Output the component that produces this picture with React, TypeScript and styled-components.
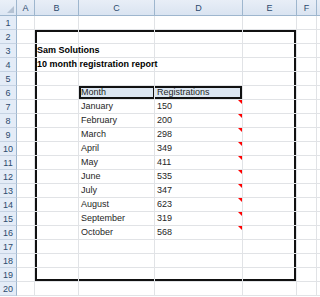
import { Fragment } from "react";
import styled, { createGlobalStyle } from "styled-components";

const GlobalStyle = createGlobalStyle`
  html, body {
    margin: 0;
    padding: 0;
    background: #ffffff;
  }
`;

const Sheet = styled.div`
  display: grid;
  grid-template-columns: 17px 18px 44px 76px 88px 54px 20px 1fr;
  grid-template-rows: 16px repeat(20, 14px);
  width: 320px;
  height: 297px;
  overflow: hidden;
  font-family: "Liberation Sans", Arial, sans-serif;
  font-size: 9px;
  color: #262626;
`;

const Corner = styled.div`
  position: relative;
  box-sizing: border-box;
  background: linear-gradient(#eaf0f8, #dce6f3);
  border-right: 1px solid #9eb6ce;
  border-bottom: 1px solid #9eb6ce;

  &::after {
    content: "";
    position: absolute;
    right: 2px;
    bottom: 2px;
    border-bottom: 7px solid #b4c2d3;
    border-left: 7px solid transparent;
  }
`;

const ColHead = styled.div`
  box-sizing: border-box;
  display: flex;
  align-items: center;
  justify-content: center;
  background: linear-gradient(#e8eef7, #dae4f1);
  border-right: 1px solid #9eb6ce;
  border-bottom: 1px solid #9eb6ce;
  color: #2c4a6e;
  font-size: 9px;
`;

const RowHead = styled.div`
  box-sizing: border-box;
  display: flex;
  align-items: center;
  justify-content: center;
  background: #e4ecf7;
  border-right: 1px solid #9eb6ce;
  border-bottom: 1px solid #c6d3e3;
  color: #2c4a6e;
  font-size: 9px;
`;

type Edges = { t?: number; r?: number; b?: number; l?: number };

const shadowFor = (e: Edges, color: string) => {
  const parts: string[] = [];
  if (e.t) parts.push(`inset 0 ${e.t}px 0 ${color}`);
  if (e.b) parts.push(`inset 0 -${e.b}px 0 ${color}`);
  if (e.l) parts.push(`inset ${e.l}px 0 0 ${color}`);
  if (e.r) parts.push(`inset -${e.r}px 0 0 ${color}`);
  return parts.length ? parts.join(", ") : "none";
};

const Cell = styled.div<{
  $edges: Edges;
  $fill?: string;
  $bold?: boolean;
  $note?: boolean;
}>`
  position: relative;
  box-sizing: border-box;
  display: flex;
  align-items: flex-end;
  padding: 0 2px 1px 2px;
  white-space: nowrap;
  overflow: visible;
  border-right: 1px solid #e1e3e6;
  border-bottom: 1px solid #e1e3e6;
  background: ${(p) => p.$fill || "transparent"};
  box-shadow: ${(p) => shadowFor(p.$edges, "#111")};
  font-weight: ${(p) => (p.$bold ? 700 : 400)};
  color: ${(p) => (p.$bold ? "#000" : "#262626")};
  line-height: 11px;
  z-index: ${(p) => (p.$bold ? 1 : 0)};

  &::after {
    content: "";
    display: ${(p) => (p.$note ? "block" : "none")};
    position: absolute;
    top: 0;
    right: 0;
    border-top: 4px solid #ff0000;
    border-left: 4px solid transparent;
  }
`;

const columns = ["A", "B", "C", "D", "E", "F", "G"];

const months: [string, string][] = [
  ["January", "150"],
  ["February", "200"],
  ["March", "298"],
  ["April", "349"],
  ["May", "411"],
  ["June", "535"],
  ["July", "347"],
  ["August", "623"],
  ["September", "319"],
  ["October", "568"],
];

function cellText(col: string, row: number): string {
  if (col === "B" && row === 3) return "Sam Solutions";
  if (col === "B" && row === 4) return "10 month registration report";
  if (row === 6 && col === "C") return "Month";
  if (row === 6 && col === "D") return "Registrations";
  if (row >= 7 && row <= 16) {
    const m = months[row - 7];
    if (col === "C") return m[0];
    if (col === "D") return m[1];
  }
  return "";
}

// outline of B2:E19 and the boxed header row C6:D6
function edgesFor(col: string, row: number): Edges {
  const e: Edges = {};
  const inBox = row >= 2 && row <= 19 && "BCDE".includes(col);
  if (inBox) {
    if (row === 2) e.t = 2;
    if (row === 19) e.b = 2;
    if (col === "B") e.l = 2;
    if (col === "E") e.r = 2;
  }
  if (row === 6 && (col === "C" || col === "D")) {
    e.t = 2;
    e.b = 2;
    if (col === "C") {
      e.l = 2;
      e.r = 1;
    }
    if (col === "D") e.r = 2;
  }
  return e;
}

export default function App() {
  const rows = Array.from({ length: 20 }, (_, i) => i + 1);
  return (
    <>
      <GlobalStyle />
      <Sheet>
        <Corner />
        {columns.map((c) => (
          <ColHead key={c}>{c === "G" ? "" : c}</ColHead>
        ))}
        {rows.map((r) => (
          <Fragment key={r}>
            <RowHead>{r}</RowHead>
            {columns.map((c) => (
              <Cell
                key={`${c}${r}`}
                $edges={edgesFor(c, r)}
                $fill={r === 6 && (c === "C" || c === "D") ? "#dce6f1" : undefined}
                $bold={c === "B" && (r === 3 || r === 4)}
                $note={c === "D" && r >= 7 && r <= 16}
              >
                {cellText(c, r)}
              </Cell>
            ))}
          </Fragment>
        ))}
      </Sheet>
    </>
  );
}
